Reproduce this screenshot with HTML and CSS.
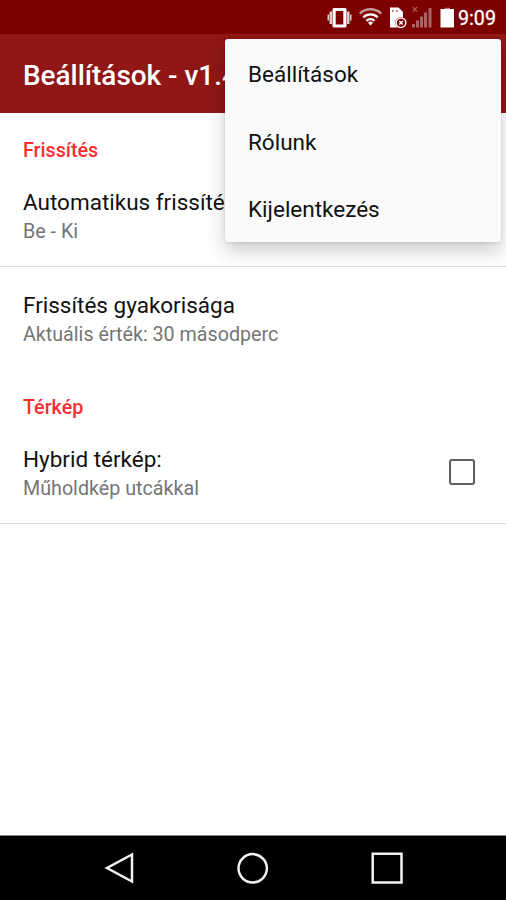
FILE: index.html
```
<!DOCTYPE html>
<html lang="hu">
<head>
    <meta charset="utf-8">
    <meta name="viewport" content="width=device-width, initial-scale=1">
    <title>Beállítások</title>
    <link rel="stylesheet" href="styles.css">
</head>
<body>
    <div class="screen">
        <div class="status-bar">
            <svg class="status-icons" width="130" height="34" viewBox="0 0 130 34">
                <!-- vibrate -->
                <g fill="#fff">
                    <path fill-rule="evenodd" d="M7 8h11a1.500 1.500 0 0 1 1.500 1.500V26a1.500 1.500 0 0 1-1.500 1.500H7A1.500 1.500 0 0 1 5.500 26V9.500A1.500 1.500 0 0 1 7 8zM8.700 11v13.500h7.600V11z"/>
                    <path opacity=".8" d="M2.500 11.500h2.500v12.500H2.500zM20 11.500h2.500v12.500H20zM.500 14.500h1.500v6H.500zM23 14.500h1.500v6H23z"/>
                </g>
                <!-- wifi -->
                <g fill="none" stroke="#fff" stroke-width="2.400">
                    <path opacity=".6" d="M32.800 13.600a15.500 15.500 0 0 1 21.400 0"/>
                    <path d="M36.300 17.400a10.200 10.200 0 0 1 14.400 0"/>
                    <path d="M39.500 20.800a5.700 5.700 0 0 1 8 0"/>
                </g>
                <path fill="#fff" d="M41 22.700a3.500 3.500 0 0 1 5 0l-2.500 2.700z"/>
                <!-- sim card error -->
                <path fill="#fff" d="M63 7.500h8.500l4.500 4.500V27.500H63z"/>
                <path fill="#7a0000" opacity=".6" d="M65 10h1.500v2H65zM69 10h1.500v2H69z"/>
                <circle cx="74" cy="22.700" r="5.800" fill="#7a0000"/>
                <circle cx="74" cy="22.700" r="4.800" fill="none" stroke="#fff" stroke-width="1.500"/>
                <path d="M72.200 20.900l3.600 3.600M75.800 20.900l-3.600 3.600" stroke="#fff" stroke-width="1.400"/>
                <!-- signal -->
                <g fill="#a86464">
                    <path d="M85 24h3v3.500h-3zM89 20.500h3v7h-3zM93 16.500h3v11h-3zM97 12.500h3v15h-3zM101.500 8h3v19.500h-3z"/>
                </g>
                <path d="M85.500 7l4.600 4.600M90.100 7l-4.600 4.600" stroke="#a85c5c" stroke-width="1.200"/>
                <!-- battery -->
                <path fill="#c08080" d="M117.500 7.800h5.500v1.200h-5.500z"/>
                <path fill="#fff" d="M113.500 9h13.500v18.500h-13.500z"/>
            </svg>
            <span class="clock">9:09</span>
        </div>
        <div class="app-bar">
            <h1 class="title">Beállítások - v1.4</h1>
        </div>
        <div class="settings">
            <h2 class="category">Frissítés</h2>
            <div class="pref divided">
                <div class="pref-text">
                    <div class="pref-title">Automatikus frissítés</div>
                    <div class="pref-summary">Be - Ki</div>
                </div>
            </div>
            <div class="pref">
                <div class="pref-text">
                    <div class="pref-title">Frissítés gyakorisága</div>
                    <div class="pref-summary">Aktuális érték: 30 másodperc</div>
                </div>
            </div>
            <h2 class="category">Térkép</h2>
            <div class="pref divided">
                <div class="pref-text">
                    <div class="pref-title">Hybrid térkép:</div>
                    <div class="pref-summary">Műholdkép utcákkal</div>
                </div>
                <span class="checkbox" role="checkbox" aria-checked="false"></span>
            </div>
        </div>
        <div class="nav-bar">
            <svg width="32" height="32" viewBox="0 0 32 32"><path d="M29 2.500v27L4 16z"/></svg>
            <svg width="32" height="32" viewBox="0 0 32 32"><circle cx="15.700" cy="16.300" r="14.200"/></svg>
            <svg width="32" height="32" viewBox="0 0 32 32"><path d="M1.700 1.700h28.800v28.800H1.700z"/></svg>
        </div>
        <div class="menu">
            <div class="menu-item">Beállítások</div>
            <div class="menu-item">Rólunk</div>
            <div class="menu-item">Kijelentkezés</div>
        </div>
    </div>
</body>
</html>
```
FILE: styles.css
```
* {
    margin: 0;
    padding: 0;
    box-sizing: border-box;
}
body {
    font-family: Roboto, "Liberation Sans", sans-serif;
    background: #fff;
    color: #111;
}
.screen {
    position: relative;
    display: flex;
    flex-direction: column;
    width: 506px;
    height: 900px;
    overflow: hidden;
}
.status-bar {
    display: flex;
    justify-content: flex-end;
    align-items: center;
    height: 34px;
    padding-right: 10px;
    background: #7d0000;
    color: #fff;
}
.status-icons {
    margin-right: 1px;
}
.clock {
    font-size: 19.700px;
    line-height: 34px;
    padding-top: 3px;
    -webkit-text-stroke: 0.300px #fff;
}
.app-bar {
    display: flex;
    align-items: center;
    height: 79px;
    padding: 4px 23px 0;
    background: #901715;
}
.title {
    font-size: 27.900px;
    font-weight: 500;
    line-height: 36px;
    color: #fff;
    white-space: nowrap;
}
.settings {
    flex: 1;
}
.category {
    height: 51px;
    padding: 26px 23px 0;
    font-size: 19.700px;
    font-weight: 500;
    line-height: 24px;
    color: #f5302f;
}
.pref {
    display: flex;
    align-items: center;
    height: 103px;
    padding: 0 31px 0 23px;
}
.divided {
    border-bottom: 1px solid #dcdcdc;
}
.pref-text {
    flex: 1;
    padding-top: 2px;
}
.pref-title {
    font-size: 22.500px;
    line-height: 30px;
    white-space: nowrap;
}
.pref-summary {
    font-size: 19.700px;
    line-height: 29px;
    color: #757575;
}
.checkbox {
    width: 26px;
    height: 26px;
    border: 2px solid #5f5f5f;
    border-radius: 3px;
}
.nav-bar {
    display: flex;
    justify-content: center;
    align-items: center;
    gap: 102px;
    height: 65px;
    background: #000;
    border-top: 1px solid #888;
}
.nav-bar svg {
    fill: none;
    stroke: #f2f2f2;
    stroke-width: 2.500;
}
.menu {
    position: absolute;
    top: 39px;
    right: 5px;
    width: 276px;
    height: 203px;
    padding-top: 1px;
    background: #fafafa;
    border-radius: 3px;
    box-shadow: 0 9px 20px rgba(0, 0, 0, 0.2), 0 1px 3px rgba(0, 0, 0, 0.1);
}
.menu-item {
    height: 67.500px;
    padding-left: 23px;
    font-size: 22.500px;
    line-height: 68px;
}
```
